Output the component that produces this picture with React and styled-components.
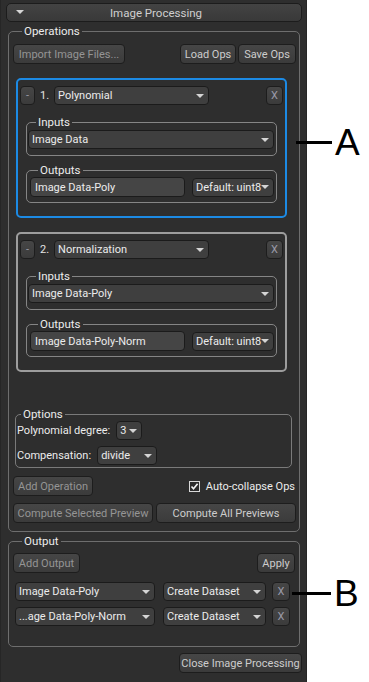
import React from 'react'
import styled, { createGlobalStyle } from 'styled-components'

const Global = createGlobalStyle`
  html, body {
    margin: 0;
    background: #fff;
  }
  body {
    font-family: Roboto, "Liberation Sans", sans-serif;
    font-size: 11px;
  }
`

const Page = styled.div`
  position: relative;
  display: flex;
  width: 369px;
  height: 682px;
  overflow: hidden;
`

const Panel = styled.div`
  box-sizing: border-box;
  width: 307px;
  height: 682px;
  padding: 3px 4px 0 5px;
  background: #2e2e2e;
  border-left: 1px solid #262626;
  border-right: 1px solid #262626;
  display: flex;
  flex-direction: column;
  color: #e4e4e4;
`

const Header = styled.div`
  box-sizing: border-box;
  height: 19px;
  border: 1px solid #1c1c1c;
  border-radius: 5px;
  background: linear-gradient(#434343, #393939);
  display: flex;
  align-items: center;
  position: relative;
  justify-content: center;
  color: #cfcfcf;
  font-size: 11.5px;
  padding-left: 4px;

  &::before {
    content: '';
    position: absolute;
    left: 9px;
    top: 6px;
    border-left: 4px solid transparent;
    border-right: 4px solid transparent;
    border-top: 4px solid #d6d6d6;
  }
`

const Group = styled.fieldset`
  box-sizing: border-box;
  min-width: 0;
  margin: ${p => p.$margin || '0'};
  padding: ${p => p.$pad || '0'};
  border: 1px solid ${p => p.$line || '#6e6e6e'};
  border-radius: 5px;
`

const Legend = styled.legend`
  padding: 0 2px;
  margin-left: ${p => p.$indent || 8}px;
  line-height: 14px;
  height: 14px;
  font-size: 11.5px;
  color: #ececec;
`

const Row = styled.div`
  display: flex;
  align-items: center;
  gap: ${p => p.$gap || 0}px;
  margin: ${p => p.$margin || '0'};
  padding: ${p => p.$pad || '0'};
`

const Spacer = styled.div`
  flex: 1;
`

const Button = styled.div`
  box-sizing: border-box;
  height: ${p => p.$h || 20}px;
  width: ${p => (p.$w ? `${p.$w}px` : 'auto')};
  flex: ${p => (p.$grow ? 1 : 'none')};
  border: 1px solid #1d1d1d;
  border-radius: 4px;
  background: linear-gradient(#464646, #3b3b3b);
  color: ${p => (p.$dim ? '#959595' : '#cdcdcd')};
  display: flex;
  align-items: center;
  justify-content: center;
  white-space: nowrap;
  padding: 0 3px;
`

const Combo = styled.div`
  box-sizing: border-box;
  height: ${p => p.$h || 19}px;
  width: ${p => (p.$w ? `${p.$w}px` : 'auto')};
  flex: ${p => (p.$grow ? 1 : 'none')};
  border: 1px solid #1b1b1b;
  border-radius: 4px;
  background: #3f3f3f;
  color: #ececec;
  display: flex;
  align-items: center;
  padding: 0 13px 0 3px;
  position: relative;
  white-space: nowrap;
  overflow: hidden;

  &::after {
    content: '';
    position: absolute;
    right: 4px;
    top: 50%;
    margin-top: -2px;
    border-left: 4px solid transparent;
    border-right: 4px solid transparent;
    border-top: 4px solid #d4d4d4;
  }
`

const LineEdit = styled.div`
  box-sizing: border-box;
  height: 20px;
  width: 155px;
  border: 1px solid #1b1b1b;
  border-radius: 4px;
  background: #454545;
  color: #ececec;
  display: flex;
  align-items: center;
  padding: 0 4px;
  white-space: nowrap;
`

const OpBox = styled.div`
  box-sizing: border-box;
  height: 140px;
  margin: ${p => p.$margin};
  border: 2px solid ${p => (p.$active ? '#1c8ae4' : '#9d9d9d')};
  border-radius: 5px;
  padding: 6px 2px 0 2px;
  display: flex;
  flex-direction: column;
`

const Num = styled.span`
  margin: 0 5px 0 5px;
  color: #e4e4e4;
`

const SmallButton = styled(Button)`
  padding: 0;
  color: #9a9aa8;
`

const Label = styled.span`
  color: #ececec;
  white-space: nowrap;
`

const Check = styled.span`
  box-sizing: border-box;
  width: 11px;
  height: 11px;
  border: 1px solid #d8d8d8;
  background: #2a2a2a;
  display: flex;
  align-items: center;
  justify-content: center;
`

const Callout = styled.div`
  position: absolute;
  left: ${p => p.$left}px;
  top: ${p => p.$top}px;
  display: flex;
  align-items: center;
  gap: 3px;
`

const CalloutLine = styled.div`
  width: ${p => p.$w}px;
  height: 3px;
  background: #000;
`

const CalloutLetter = styled.span`
  font-family: "Liberation Sans", Arial, sans-serif;
  font-size: 37px;
  line-height: 37px;
  color: #000;
`

const Operation = ({ index, name, input, output, active, margin }) => (
  <OpBox $active={active} $margin={margin}>
    <Row>
      <SmallButton $w={15} $h={19}>-</SmallButton>
      <Num>{index}.</Num>
      <Combo $w={155}>{name}</Combo>
      <Spacer />
      <SmallButton $w={17} $h={19}>X</SmallButton>
    </Row>
    <Group $margin="10px 6px 0" $pad="1px 2px 6px 1px" $line="#858585">
      <Legend>Inputs</Legend>
      <Combo>{input}</Combo>
    </Group>
    <Group $margin="7px 6px 0" $pad="0 2px 5px 3px" $line="#858585">
      <Legend>Outputs</Legend>
      <Row $gap={7}>
        <LineEdit>{output}</LineEdit>
        <Combo $grow>Default: uint8</Combo>
      </Row>
    </Group>
  </OpBox>
)

export default function App() {
  return (
    <Page>
      <Global />
      <Panel>
        <Header>Image Processing</Header>

        <Group $margin="2px 2px 0" $pad="6px 3px 8px 4px">
          <Legend $indent={9}>Operations</Legend>
          <Row $gap={2}>
            <Button $dim $w={112}>Import Image Files...</Button>
            <Spacer />
            <Button $w={56}>Load Ops</Button>
            <Button $w={58}>Save Ops</Button>
          </Row>

          <Operation
            active
            index={1}
            name="Polynomial"
            input="Image Data"
            output="Image Data-Poly"
            margin="14px 9px 0 3px"
          />
          <Operation
            index={2}
            name="Normalization"
            input="Image Data-Poly"
            output="Image Data-Poly-Norm"
            margin="14px 9px 0 3px"
          />

          <Group $margin="35px 4px 0 2px" $pad="0 4px 2px 1px" $line="#7a7a7a">
            <Legend $indent={4}>Options</Legend>
            <Row $gap={6}>
              <Label>Polynomial degree:</Label>
              <Combo $w={26}>3</Combo>
            </Row>
            <Row $gap={6} $margin="6px 0 0">
              <Label>Compensation:</Label>
              <Combo $w={60}>divide</Combo>
            </Row>
          </Group>

          <Row $margin="8px 0 0">
            <Button $dim $w={80}>Add Operation</Button>
            <Spacer />
            <Check>
              <svg width="9" height="9" viewBox="0 0 9 9">
                <path d="M1.5 4.5 L3.5 6.8 L7.6 1.8" fill="none" stroke="#f2f2f2" strokeWidth="1.6" />
              </svg>
            </Check>
            <Label style={{ marginLeft: 6, marginRight: 1 }}>Auto-collapse Ops</Label>
          </Row>
          <Row $gap={3} $margin="7px 0 0">
            <Button $dim $grow>Compute Selected Preview</Button>
            <Button $grow>Compute All Previews</Button>
          </Row>
        </Group>

        <Group $margin="2px 2px 0" $pad="5px 4px 20px 4px">
          <Legend $indent={9}>Output</Legend>
          <Row>
            <Button $dim $w={67}>Add Output</Button>
            <Spacer />
            <Button $w={38}>Apply</Button>
          </Row>
          <Row $gap={8} $pad="0 0 0 2px" $margin="9px 0 0">
            <Combo $w={140}>Image Data-Poly</Combo>
            <Combo $w={103}>Create Dataset</Combo>
            <SmallButton $w={18} $h={19} style={{ marginLeft: -2 }}>X</SmallButton>
          </Row>
          <Row $gap={8} $pad="0 0 0 2px" $margin="6px 0 0">
            <Combo $w={140}>...age Data-Poly-Norm</Combo>
            <Combo $w={103}>Create Dataset</Combo>
            <SmallButton $w={18} $h={19} style={{ marginLeft: -2 }}>X</SmallButton>
          </Row>
        </Group>

        <Row $margin="6px 0 0">
          <Spacer />
          <Button $w={123}>Close Image Processing</Button>
        </Row>
      </Panel>

      <Callout $left={296} $top={124}>
        <CalloutLine $w={36} />
        <CalloutLetter>A</CalloutLetter>
      </Callout>
      <Callout $left={292} $top={575}>
        <CalloutLine $w={39} />
        <CalloutLetter>B</CalloutLetter>
      </Callout>
    </Page>
  )
}
